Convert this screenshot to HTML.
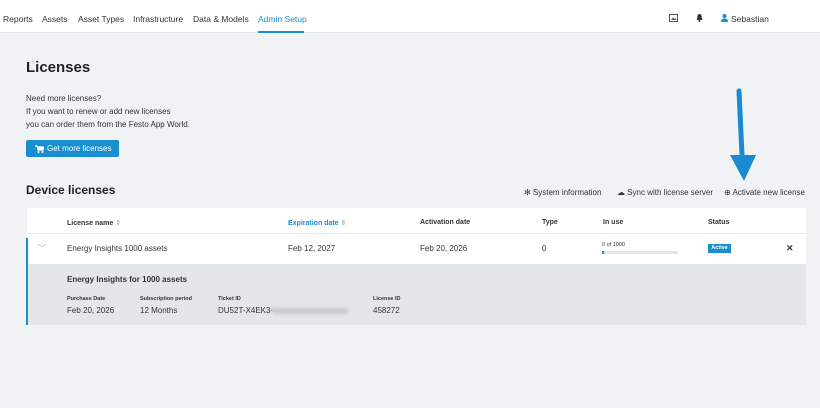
<!DOCTYPE html>
<html><head><meta charset="utf-8"><style>
*{margin:0;padding:0;box-sizing:border-box}
body{width:820px;height:408px;background:#f0f2f4;font-family:"Liberation Sans",sans-serif;color:#333;position:relative;overflow:hidden;font-size:8px}
.a{position:absolute;white-space:nowrap}
.nav{position:absolute;left:0;top:0;width:820px;height:33px;background:#fff;border-bottom:1px solid #e2e4e6}
.b{font-weight:bold}
</style></head><body>
<div class="nav">
<span class="a" style="left:3px;top:14px;font-size:8.5px">Reports</span>
<span class="a" style="left:42px;top:14px;font-size:8.5px">Assets</span>
<span class="a" style="left:78px;top:14px;font-size:8.5px">Asset Types</span>
<span class="a" style="left:133px;top:14px;font-size:8.5px">Infrastructure</span>
<span class="a" style="left:193px;top:14px;font-size:8.5px">Data &amp; Models</span>
<span class="a" style="left:258px;top:14px;font-size:8.5px;color:#1a8fd0">Admin Setup</span>
<div class="a" style="left:258px;top:31px;width:46px;height:2px;background:#1a8fd0"></div>
<svg class="a" style="left:669px;top:14px" width="9" height="8"><rect x="0.5" y="0.5" width="8" height="7" fill="none" stroke="#555"/><path d="M2 6 L4 3.5 L5.5 5 L7 4 L7 6Z" fill="#555"/></svg>
<svg class="a" style="left:696px;top:13px" width="7" height="9"><path d="M3.5 1 C1.5 1 1.3 3 1.3 5 L0.5 7 L6.5 7 L5.7 5 C5.7 3 5.5 1 3.5 1Z" fill="#333"/><circle cx="3.5" cy="8" r="1" fill="#333"/></svg>
<svg class="a" style="left:721px;top:14px" width="7" height="8"><circle cx="3.5" cy="2" r="2" fill="#1a8fd0"/><path d="M0 8 C0 5 1.5 4.5 3.5 4.5 C5.5 4.5 7 5 7 8Z" fill="#1a8fd0"/></svg>
<span class="a" style="left:731px;top:14px;font-size:8.5px">Sebastian</span>
</div>
<span class="a b" style="left:26px;top:59px;font-size:15px;color:#222">Licenses</span>
<span class="a" style="left:26px;top:92px;font-size:8px;line-height:13px">Need more licenses?<br>If you want to renew or add new licenses<br>you can order them from the Festo App World.</span>
<div class="a" style="left:26px;top:140px;width:93px;height:17px;background:#1a8fd0;border-radius:2px;color:#fff;font-size:8px;padding:4px 0 0 21px">Get more licenses</div>
<svg class="a" style="left:35px;top:145px" width="9" height="8"><path d="M0 1 L2 1 L3 5 L8 5 L9 2 L2.5 2" fill="none" stroke="#fff" stroke-width="1.2"/><path d="M2.5 2 L9 2 L8 5 L3 5Z" fill="#fff"/><circle cx="3.5" cy="7" r="1" fill="#fff"/><circle cx="7.5" cy="7" r="1" fill="#fff"/></svg>
<span class="a b" style="left:26px;top:183px;font-size:12px;color:#222">Device licenses</span>
<span class="a" style="left:524px;top:188px;font-size:8px">✻ System information</span>
<span class="a" style="left:617px;top:188px;font-size:8px">☁ Sync with license server</span>
<span class="a" style="left:724px;top:188px;font-size:8px">⊕ Activate new license</span>
<div class="a" style="left:27px;top:208px;width:779px;height:56px;background:#fff"></div>
<div class="a" style="left:27px;top:233px;width:779px;height:1px;background:#e6e8ea"></div>
<div class="a" style="left:27px;top:264px;width:779px;height:61px;background:#e4e7e9"></div>
<div class="a" style="left:26px;top:238px;width:2px;height:87px;background:#1a8fd0"></div>
<span class="a b" style="left:67px;top:219px;font-size:7px">License name <span style="color:#bbb">⇕</span></span>
<span class="a b" style="left:288px;top:219px;font-size:7px;color:#1a8fd0">Expiration date <span style="color:#bbb">⇕</span></span>
<span class="a b" style="left:420px;top:219px;font-size:7px">Activation date</span>
<span class="a b" style="left:542px;top:219px;font-size:7px">Type</span>
<span class="a b" style="left:603px;top:219px;font-size:7px">In use</span>
<span class="a b" style="left:708px;top:219px;font-size:7px">Status</span>
<span class="a" style="left:38px;top:243px;font-size:8px;color:#999">﹀</span>
<span class="a" style="left:67px;top:244px;font-size:8px">Energy Insights 1000 assets</span>
<span class="a" style="left:288px;top:244px;font-size:8px">Feb 12, 2027</span>
<span class="a" style="left:420px;top:244px;font-size:8px">Feb 20, 2026</span>
<span class="a" style="left:542px;top:244px;font-size:8px">0</span>
<span class="a" style="left:602px;top:242px;font-size:5.5px">0 of 1000</span>
<div class="a" style="left:602px;top:251px;width:76px;height:3px;background:#e2e4e6"><div style="width:2px;height:3px;background:#1a8fd0"></div></div>
<div class="a b" style="left:708px;top:244px;width:23px;height:9px;background:#1a8fd0;color:#fff;font-size:5.5px;text-align:center;line-height:9px">Active</div>
<span class="a b" style="left:786px;top:243px;font-size:9px">✕</span>
<span class="a b" style="left:67px;top:275px;font-size:8px">Energy Insights for 1000 assets</span>
<span class="a b" style="left:67px;top:296px;font-size:5.5px">Purchase Date</span>
<span class="a b" style="left:140px;top:296px;font-size:5.5px">Subscription period</span>
<span class="a b" style="left:218px;top:296px;font-size:5.5px">Ticket ID</span>
<span class="a b" style="left:373px;top:296px;font-size:5.5px">License ID</span>
<span class="a" style="left:67px;top:306px;font-size:8px">Feb 20, 2026</span>
<span class="a" style="left:140px;top:306px;font-size:8px">12 Months</span>
<span class="a" style="left:218px;top:306px;font-size:8px">DU52T-X4EK3-</span>
<div class="a" style="left:272px;top:308px;width:76px;height:6px;background:#c8cbce;filter:blur(1.5px)"></div>
<span class="a" style="left:373px;top:306px;font-size:8px">458272</span>
<svg class="a" style="left:728px;top:85px" width="34" height="100"><line x1="11" y1="6" x2="14" y2="70" stroke="#1a8ad2" stroke-width="5" stroke-linecap="round"/><polygon points="2,70 28,70 16,96" fill="#1a8ad2"/></svg>
</body></html>
